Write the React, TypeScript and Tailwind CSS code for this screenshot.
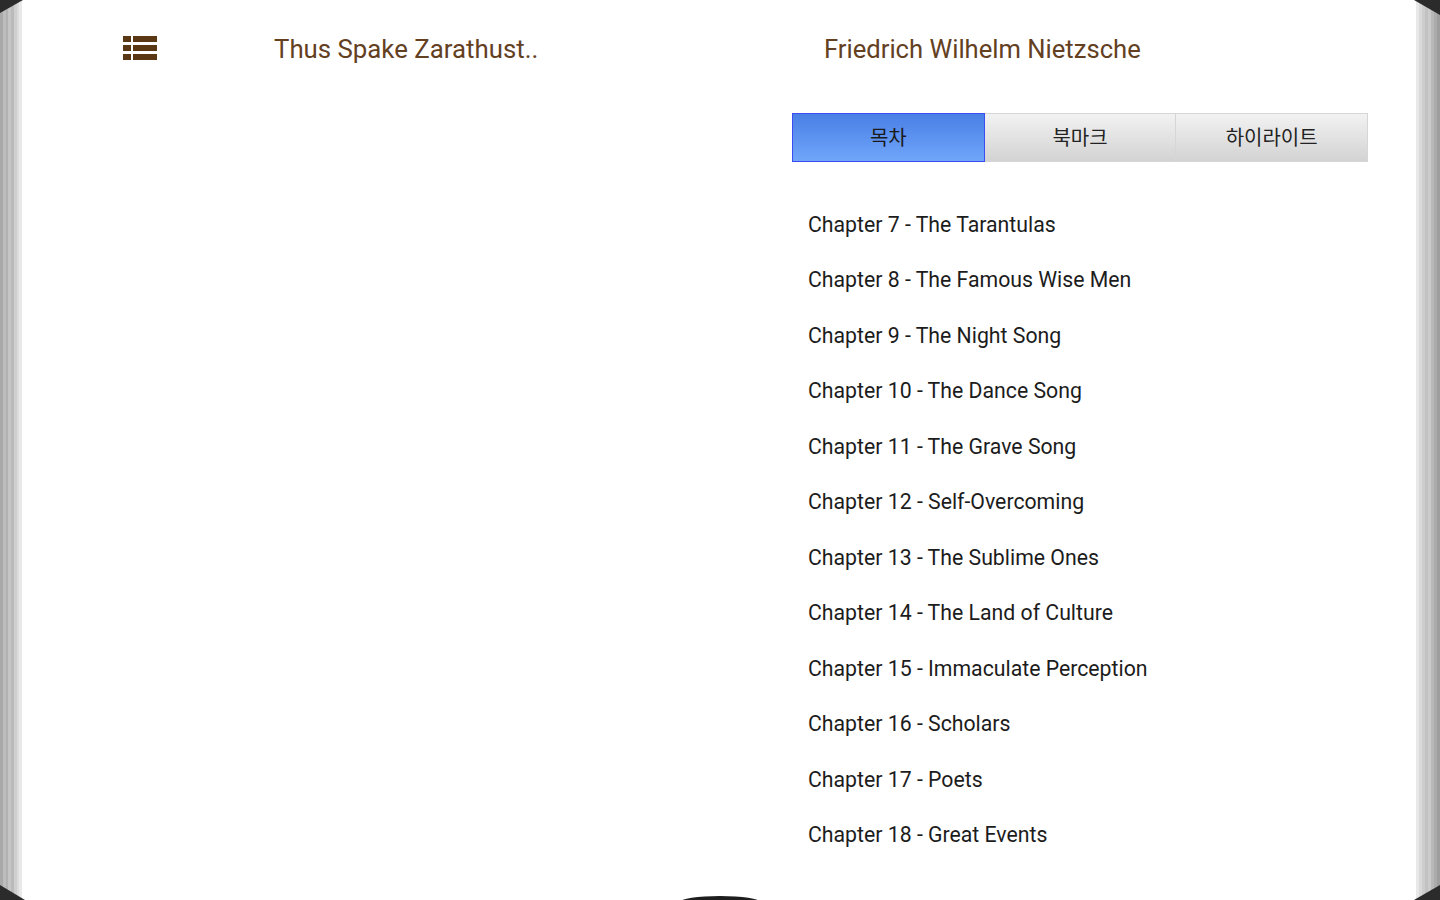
import React from 'react';

const chapters = [
  'Chapter 7 - The Tarantulas',
  'Chapter 8 - The Famous Wise Men',
  'Chapter 9 - The Night Song',
  'Chapter 10 - The Dance Song',
  'Chapter 11 - The Grave Song',
  'Chapter 12 - Self-Overcoming',
  'Chapter 13 - The Sublime Ones',
  'Chapter 14 - The Land of Culture',
  'Chapter 15 - Immaculate Perception',
  'Chapter 16 - Scholars',
  'Chapter 17 - Poets',
  'Chapter 18 - Great Events',
];

const LeftEdge: React.FC = () => (
  <div className="flex h-full w-[22px] shrink-0">
    <div className="w-[3px] bg-[#a9a9a9]" />
    <div className="w-[3px] bg-[#bdbdbd]" />
    <div className="w-[2px] bg-[#b2b2b2]" />
    <div className="w-[3px] bg-[#c6c6c6]" />
    <div className="w-[3px] bg-[#bababa]" />
    <div className="w-[3px] bg-[#cfcfcf]" />
    <div className="w-[2px] bg-[#dcdcdc]" />
    <div className="w-[3px] bg-[#e9e9e9]" />
  </div>
);

const RightEdge: React.FC = () => (
  <div className="flex h-full w-[24px] shrink-0">
    <div className="w-[3px] bg-[#e8e8e8]" />
    <div className="w-[3px] bg-[#d9d9d9]" />
    <div className="w-[3px] bg-[#cdcdcd]" />
    <div className="w-[3px] bg-[#c2c2c2]" />
    <div className="w-[3px] bg-[#cbcbcb]" />
    <div className="w-[3px] bg-[#b8b8b8]" />
    <div className="w-[3px] bg-[#ababab]" />
    <div className="w-[3px] bg-[#9e9e9e]" />
  </div>
);

const MenuIcon: React.FC = () => (
  <svg width="34" height="25" viewBox="0 0 34 25" fill="#5a3814">
    <rect x="0" y="0" width="8" height="6" />
    <rect x="10" y="0" width="24" height="6" />
    <rect x="0" y="9" width="8" height="6" />
    <rect x="10" y="9" width="24" height="6" />
    <rect x="0" y="18" width="8" height="6" />
    <rect x="10" y="18" width="24" height="6" />
  </svg>
);

export default function App() {
  return (
    <div
      className="relative flex h-[900px] w-[1440px] overflow-hidden bg-[#2b2b2b]"
      style={{ fontFamily: 'Roboto, "Noto Sans CJK KR", sans-serif' }}
    >
      <LeftEdge />
      <div className="flex flex-1 flex-col bg-white">
        <div className="flex h-[96px] items-center">
          <div className="flex w-[770px] items-center pl-[101px]">
            <MenuIcon />
            <span className="ml-[117px] mt-[2px] text-[25.8px] text-[#63401f]">Thus Spake Zarathust..</span>
          </div>
          <span className="ml-[32px] mt-[2px] text-[25.6px] text-[#63401f]">Friedrich Wilhelm Nietzsche</span>
        </div>
        <div className="flex">
          <div className="w-[770px]" />
          <div className="flex flex-col">
            <div className="mt-[17px] flex h-[49px] w-[576px]">
              <div className="flex flex-1 items-center justify-center border border-[#3b4cf2] bg-gradient-to-b from-[#4a7fe6] to-[#70a6f9] text-[20px] text-[#1a1a1a]">
                목차
              </div>
              <div className="flex flex-1 items-center justify-center border-y border-r border-[#d6d6d6] bg-gradient-to-b from-[#f2f2f2] to-[#d3d3d3] text-[20px] text-[#222]">
                북마크
              </div>
              <div className="flex flex-1 items-center justify-center border-y border-r border-[#d6d6d6] bg-gradient-to-b from-[#f2f2f2] to-[#d3d3d3] text-[20px] text-[#222]">
                하이라이트
              </div>
            </div>
            <div className="mt-[35px] flex flex-col pl-[16px]">
              {chapters.map((c) => (
                <div key={c} className="flex h-[55.5px] items-center text-[21.25px] text-[#1c1c1c]">
                  {c}
                </div>
              ))}
            </div>
          </div>
        </div>
      </div>
      <RightEdge />

      {/* corner shadows */}
      <svg className="absolute left-0 top-0" width="24" height="14">
        <polygon points="0,0 23,0 0,13" fill="#2b2b2b" />
      </svg>
      <svg className="absolute right-0 top-0" width="26" height="16">
        <polygon points="0,0 26,0 26,15" fill="#2b2b2b" />
      </svg>
      <svg className="absolute bottom-0 left-0" width="26" height="16">
        <polygon points="0,1 25,16 0,16" fill="#2b2b2b" />
      </svg>
      <svg className="absolute bottom-0 right-0" width="26" height="16">
        <polygon points="26,1 0,16 26,16" fill="#2b2b2b" />
      </svg>
      <div className="absolute bottom-[-8px] left-[680px] h-[12px] w-[80px] rounded-[50%] bg-[#1e1e1e]" />
    </div>
  );
}
